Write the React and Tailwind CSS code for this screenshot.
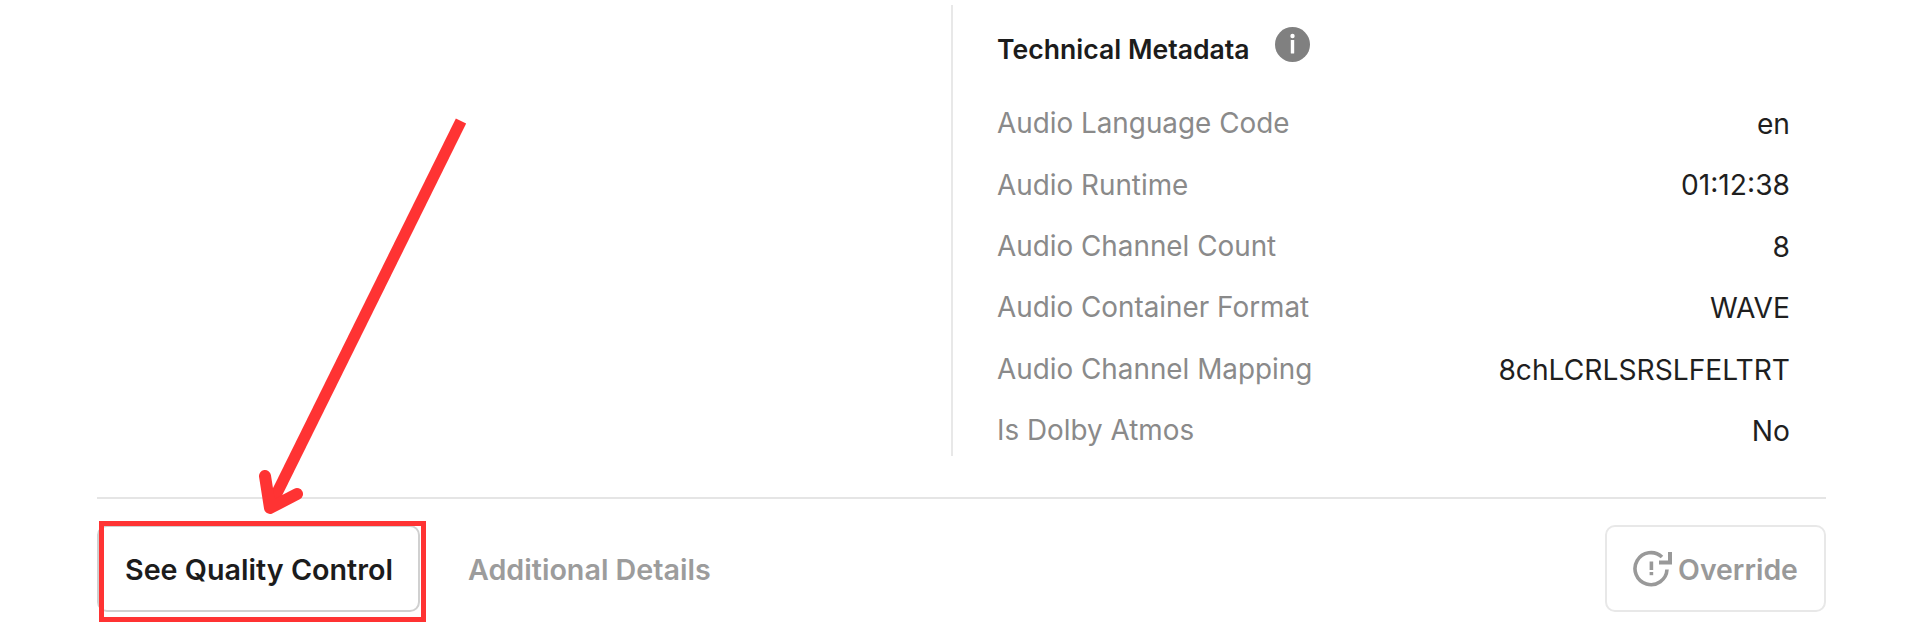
const rows = [
  ["Audio Language Code", "en"],
  ["Audio Runtime", "01:12:38"],
  ["Audio Channel Count", "8"],
  ["Audio Container Format", "WAVE"],
  ["Audio Channel Mapping", "8chLCRLSRSLFELTRT"],
  ["Is Dolby Atmos", "No"],
];

function InfoIcon() {
  return (
    <svg width="35" height="35" viewBox="0 0 35 35" className="ml-[25px] -translate-y-[5px] shrink-0">
      <circle cx="17.5" cy="17.5" r="17.5" fill="#808080" />
      <circle cx="17.5" cy="9" r="2.2" fill="#fff" />
      <rect x="15.8" y="13" width="3.4" height="13.5" rx="0.6" fill="#fff" />
    </svg>
  );
}

function OverrideIcon() {
  return (
    <svg width="40" height="38" viewBox="0 0 40 38" fill="none" stroke="#999999" className="shrink-0">
      <path d="M34 20.5A16 16 0 1 1 29 8" strokeWidth="3.6" />
      <path d="M37 3v10.5H26" strokeWidth="4" strokeLinejoin="miter" />
      <rect x="16.6" y="12.5" width="3.6" height="8.5" fill="#999999" stroke="none" />
      <rect x="16.6" y="23" width="3.6" height="3.2" fill="#999999" stroke="none" />
    </svg>
  );
}

export default function App() {
  return (
    <div className="relative w-[1920px] h-[634px] bg-white overflow-hidden font-['Inter',sans-serif]">
      <div className="flex flex-col pl-[97px] pr-[94px]">
        <div className="flex h-[497px] pt-[5px] pb-[41px]">
          <div className="w-[854px]" />
          <div className="flex-1 border-l-2 border-[#e8e8e8] pl-[44px] pr-[36px]">
            <div className="flex items-center h-[88px] pt-[1px] text-[26.6px] font-semibold text-[#1c1c1c]">
              <span>Technical Metadata</span>
              <InfoIcon />
            </div>
            <div className="flex flex-col">
              {rows.map(([k, v]) => (
                <div key={k} className="flex justify-between items-center h-[61.4px] pt-[1px]">
                  <span className="text-[27.85px] text-[#8a8a8a]">{k}</span>
                  <span className="text-[28.2px] text-[#1f1f1f]">{v}</span>
                </div>
              ))}
            </div>
          </div>
        </div>
        <div className="border-t-2 border-[#e5e5e5] flex items-center justify-between h-[140px]">
          <div className="flex items-center text-[28.7px] font-semibold">
            <div className="w-[323px] h-[87px] flex items-center pl-[26px] pt-[3px] rounded-[10px] border-2 border-[#d0d0d0] bg-white text-[#1c1c1c]">
              See Quality Control
            </div>
            <div className="ml-[48px] pt-[3px] text-[#9c9c9c]">Additional Details</div>
          </div>
          <button className="w-[221px] h-[87px] flex items-center justify-center gap-[5px] rounded-[10px] border-2 border-[#e8e8e8] text-[28.4px] font-semibold text-[#999999]">
            <OverrideIcon />
            <span className="pt-[4px]">Override</span>
          </button>
        </div>
      </div>

      <div className="absolute left-[99px] top-[521px] w-[327px] h-[101px] border-[5px] border-[#ff3333]" />
      <svg className="absolute left-0 top-0" width="1920" height="634" fill="none" stroke="#ff3333">
        <path d="M461 121 L272 503" strokeWidth="11.5" />
        <path d="M265 476 L270 508 L297 494" strokeWidth="12" strokeLinecap="round" strokeLinejoin="round" />
      </svg>
    </div>
  );
}
